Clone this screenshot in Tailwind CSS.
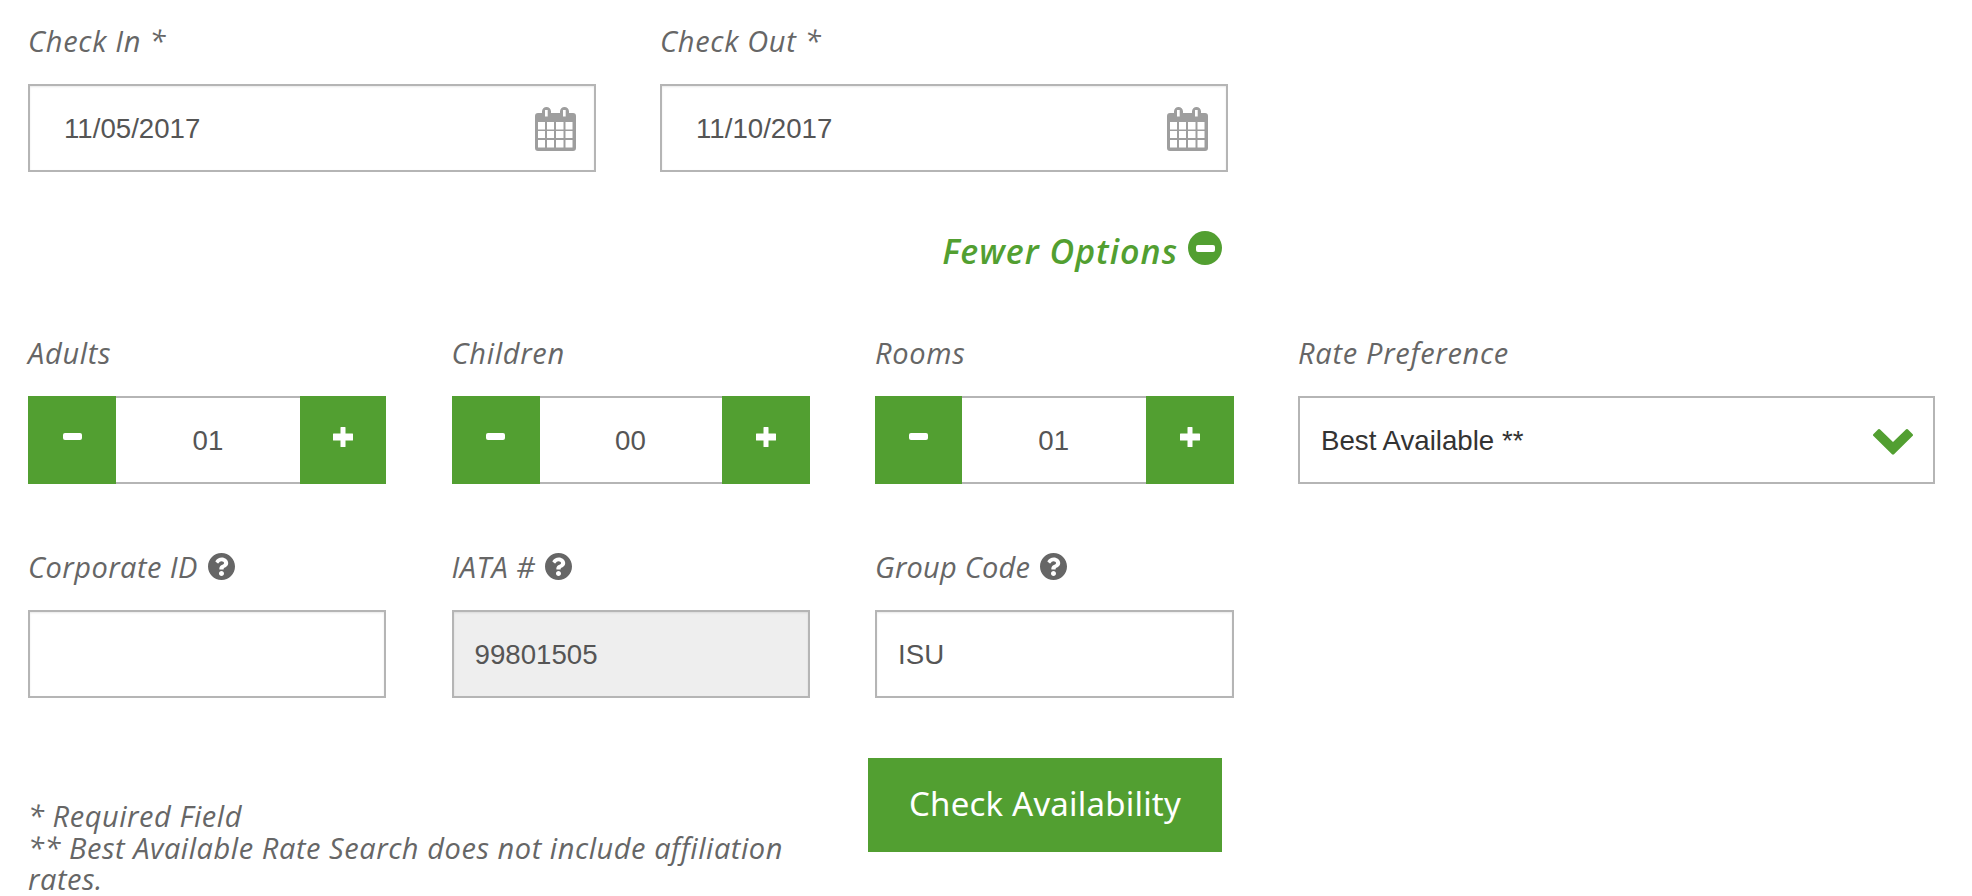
<!doctype html>
<html lang="en">
<head>
<meta charset="utf-8">
<title>Check Availability</title>
<script src="https://cdn.jsdelivr.net/npm/@tailwindcss/browser@4"></script>
</head>
<body class="bg-white font-['Liberation_Sans',Arial,sans-serif] text-[27.67px] text-[#555] overflow-hidden">
<main class="w-[1972px] h-[896px] pl-[28px] pt-[24px]">
  <section class="grid grid-cols-[568px_568px] gap-x-[64px]">
    <div>
      <label class="block h-[36px] mb-[24px] font-['Open_Sans',sans-serif] italic text-[29px] tracking-[0.7px] leading-[34px] text-[#666]">Check In *</label>
      <div class="relative h-[88px] border-2 border-[#b5b5b5] shadow-[inset_0_1px_2px_rgba(0,0,0,0.09)] pl-[34px] pt-[2px] flex items-center">
        <span>11/05/2017</span>
        <svg class="absolute left-[505px] top-[21px] w-[41px] h-[44px]" viewBox="0 0 41 44"><path fill="#9e9e9e" d="M3 6h4V4.500a4.500 4.500 0 0 1 9 0V6h9V4.500a4.500 4.500 0 0 1 9 0V6h4a3 3 0 0 1 3 3v32a3 3 0 0 1-3 3H3a3 3 0 0 1-3-3V9a3 3 0 0 1 3-3z"/><path fill="#fff" d="M10 3h2.700v6.500H10zM28 3h2.700v6.500H28zM3 15h7v7.500H3zM12 15h7v7.500h-7zM21 15h7.500v7.500H21zM30.500 15h7v7.500h-7zM3 24h7v7H3zM12 24h7v7h-7zM21 24h7.500v7H21zM30.500 24h7v7h-7zM3 33h7v7.500H3zM12 33h7v7.500h-7zM21 33h7.500v7.500H21zM30.500 33h7v7.500h-7z"/></svg>
      </div>
    </div>
    <div>
      <label class="block h-[36px] mb-[24px] font-['Open_Sans',sans-serif] italic text-[29px] tracking-[0.7px] leading-[34px] text-[#666]">Check Out *</label>
      <div class="relative h-[88px] border-2 border-[#b5b5b5] shadow-[inset_0_1px_2px_rgba(0,0,0,0.09)] pl-[34px] pt-[2px] flex items-center">
        <span>11/10/2017</span>
        <svg class="absolute left-[505px] top-[21px] w-[41px] h-[44px]" viewBox="0 0 41 44"><path fill="#9e9e9e" d="M3 6h4V4.500a4.500 4.500 0 0 1 9 0V6h9V4.500a4.500 4.500 0 0 1 9 0V6h4a3 3 0 0 1 3 3v32a3 3 0 0 1-3 3H3a3 3 0 0 1-3-3V9a3 3 0 0 1 3-3z"/><path fill="#fff" d="M10 3h2.700v6.500H10zM28 3h2.700v6.500H28zM3 15h7v7.500H3zM12 15h7v7.500h-7zM21 15h7.500v7.500H21zM30.500 15h7v7.500h-7zM3 24h7v7H3zM12 24h7v7h-7zM21 24h7.500v7H21zM30.500 24h7v7h-7zM3 33h7v7.500H3zM12 33h7v7.500h-7zM21 33h7.500v7.500H21zM30.500 33h7v7.500h-7z"/></svg>
      </div>
    </div>
  </section>

  <div class="w-[1194px] h-[164px] pt-[56px] flex justify-end items-start gap-[10px]">
    <a class="font-['Open_Sans',sans-serif] italic font-semibold text-[34px] tracking-[1px] leading-[46px] text-[#529f31]">Fewer Options</a>
    <span class="mt-[3px] w-[34px] h-[34px] rounded-full bg-[#529f31] flex items-center justify-center"><span class="block w-[19px] h-[7px] rounded-[2px] bg-white"></span></span>
  </div>

  <section class="grid grid-cols-[358px_358px_358.5px_636px] gap-x-[65.5px]">
    <div>
      <label class="block h-[36px] mb-[24px] font-['Open_Sans',sans-serif] italic text-[29px] tracking-[0.7px] leading-[34px] text-[#666]">Adults</label>
      <div class="flex h-[88px]">
        <button class="w-[88px] bg-[#529f31] flex justify-center pt-[37px]"><span class="block w-[19px] h-[7px] rounded-[2px] bg-white"></span></button>
        <div class="flex-1 border-y-2 border-[#b5b5b5] pt-[2px] flex items-center justify-center">01</div>
        <button class="w-[86px] bg-[#529f31] flex justify-center pt-[31px]"><svg class="w-[20px] h-[20px]" viewBox="0 0 20 20"><path fill="#fff" d="M8 0h4a.500.500 0 0 1 .500.500V6.500h7a.500.500 0 0 1 .500.500v6a.500.500 0 0 1-.500.500h-7v6a.500.500 0 0 1-.500.500H8a.500.500 0 0 1-.500-.500v-6h-7A.500.500 0 0 1 0 13V7a.500.500 0 0 1 .500-.500h7v-6A.500.500 0 0 1 8 0z"/></svg></button>
      </div>
    </div>
    <div>
      <label class="block h-[36px] mb-[24px] font-['Open_Sans',sans-serif] italic text-[29px] tracking-[0.7px] leading-[34px] text-[#666]">Children</label>
      <div class="flex h-[88px]">
        <button class="w-[88px] bg-[#529f31] flex justify-center pt-[37px]"><span class="block w-[19px] h-[7px] rounded-[2px] bg-white"></span></button>
        <div class="flex-1 border-y-2 border-[#b5b5b5] pt-[2px] flex items-center justify-center">00</div>
        <button class="w-[88px] bg-[#529f31] flex justify-center pt-[31px]"><svg class="w-[20px] h-[20px]" viewBox="0 0 20 20"><path fill="#fff" d="M8 0h4a.500.500 0 0 1 .500.500V6.500h7a.500.500 0 0 1 .500.500v6a.500.500 0 0 1-.500.500h-7v6a.500.500 0 0 1-.500.500H8a.500.500 0 0 1-.500-.500v-6h-7A.500.500 0 0 1 0 13V7a.500.500 0 0 1 .500-.500h7v-6A.500.500 0 0 1 8 0z"/></svg></button>
      </div>
    </div>
    <div>
      <label class="block h-[36px] mb-[24px] font-['Open_Sans',sans-serif] italic text-[29px] tracking-[0.7px] leading-[34px] text-[#666]">Rooms</label>
      <div class="flex h-[88px]">
        <button class="w-[87px] bg-[#529f31] flex justify-center pt-[37px]"><span class="block w-[19px] h-[7px] rounded-[2px] bg-white"></span></button>
        <div class="flex-1 border-y-2 border-[#b5b5b5] pt-[2px] flex items-center justify-center">01</div>
        <button class="w-[88px] bg-[#529f31] flex justify-center pt-[31px]"><svg class="w-[20px] h-[20px]" viewBox="0 0 20 20"><path fill="#fff" d="M8 0h4a.500.500 0 0 1 .500.500V6.500h7a.500.500 0 0 1 .500.500v6a.500.500 0 0 1-.500.500h-7v6a.500.500 0 0 1-.500.500H8a.500.500 0 0 1-.500-.500v-6h-7A.500.500 0 0 1 0 13V7a.500.500 0 0 1 .500-.500h7v-6A.500.500 0 0 1 8 0z"/></svg></button>
      </div>
    </div>
    <div class="-ml-[1px]">
      <label class="block h-[36px] mb-[24px] font-['Open_Sans',sans-serif] italic text-[29px] tracking-[0.7px] leading-[34px] text-[#666]">Rate Preference</label>
      <div class="h-[88px] border-2 border-[#b5b5b5] pl-[21px] pr-[20px] pt-[2px] flex items-center justify-between text-[#333]">
        <span>Best Available **</span>
        <svg class="w-[40px] h-[26px] mt-[1px]" viewBox="0 0 40 26"><path fill="#529f31" d="M5 .500a1.500 1.500 0 0 1 2.100 0L20 13 32.900.500a1.500 1.500 0 0 1 2.100 0l4.500 4.400a1.500 1.500 0 0 1 0 2.100L21 25.200a1.500 1.500 0 0 1-2 0L.500 7a1.500 1.500 0 0 1 0-2.100z"/></svg>
      </div>
    </div>
  </section>

  <section class="grid grid-cols-[358px_358px_358.5px] gap-x-[65.5px] mt-[65px]">
    <div>
      <label class="flex items-center gap-[10px] h-[36px] mb-[25px] font-['Open_Sans',sans-serif] italic text-[29px] tracking-[0.45px] leading-[34px] text-[#666]">Corporate ID
        <svg class="w-[27px] h-[27px] -mt-[1px]" viewBox="8 8 496 496"><path fill="#666" d="M504 256c0 136.997-111.043 248-248 248S8 392.997 8 256C8 119.083 119.043 8 256 8s248 111.083 248 248zM262.655 90c-54.497 0-89.255 22.957-116.549 63.758-3.536 5.286-2.353 12.415 2.715 16.258l34.699 26.310c5.205 3.947 12.621 3.008 16.665-2.122 17.864-22.658 30.113-35.797 57.303-35.797 20.429 0 45.698 13.148 45.698 32.958 0 14.976-12.363 22.667-32.534 33.976C247.128 238.528 216 254.941 216 296v4c0 6.627 5.373 12 12 12h56c6.627 0 12-5.373 12-12v-1.333c0-28.462 83.186-29.647 83.186-106.667 0-58.002-60.165-102-116.531-102zM256 338c-25.365 0-46 20.635-46 46 0 25.364 20.635 46 46 46s46-20.636 46-46c0-25.365-20.635-46-46-46z"/></svg>
      </label>
      <div class="h-[88px] border-2 border-[#b5b5b5] shadow-[inset_0_1px_2px_rgba(0,0,0,0.09)]"></div>
    </div>
    <div>
      <label class="flex items-center gap-[10px] h-[36px] mb-[25px] font-['Open_Sans',sans-serif] italic text-[29px] tracking-[0.45px] leading-[34px] text-[#666]">IATA #
        <svg class="w-[27px] h-[27px] -mt-[1px]" viewBox="8 8 496 496"><path fill="#666" d="M504 256c0 136.997-111.043 248-248 248S8 392.997 8 256C8 119.083 119.043 8 256 8s248 111.083 248 248zM262.655 90c-54.497 0-89.255 22.957-116.549 63.758-3.536 5.286-2.353 12.415 2.715 16.258l34.699 26.310c5.205 3.947 12.621 3.008 16.665-2.122 17.864-22.658 30.113-35.797 57.303-35.797 20.429 0 45.698 13.148 45.698 32.958 0 14.976-12.363 22.667-32.534 33.976C247.128 238.528 216 254.941 216 296v4c0 6.627 5.373 12 12 12h56c6.627 0 12-5.373 12-12v-1.333c0-28.462 83.186-29.647 83.186-106.667 0-58.002-60.165-102-116.531-102zM256 338c-25.365 0-46 20.635-46 46 0 25.364 20.635 46 46 46s46-20.636 46-46c0-25.365-20.635-46-46-46z"/></svg>
      </label>
      <div class="h-[88px] border-2 border-[#b5b5b5] bg-[#eeeeee] shadow-[inset_0_1px_2px_rgba(0,0,0,0.09)] pl-[21px] pt-[2px] flex items-center">99801505</div>
    </div>
    <div>
      <label class="flex items-center gap-[10px] h-[36px] mb-[25px] font-['Open_Sans',sans-serif] italic text-[29px] tracking-[0.2px] leading-[34px] text-[#666]">Group Code
        <svg class="w-[27px] h-[27px] -mt-[1px]" viewBox="8 8 496 496"><path fill="#666" d="M504 256c0 136.997-111.043 248-248 248S8 392.997 8 256C8 119.083 119.043 8 256 8s248 111.083 248 248zM262.655 90c-54.497 0-89.255 22.957-116.549 63.758-3.536 5.286-2.353 12.415 2.715 16.258l34.699 26.310c5.205 3.947 12.621 3.008 16.665-2.122 17.864-22.658 30.113-35.797 57.303-35.797 20.429 0 45.698 13.148 45.698 32.958 0 14.976-12.363 22.667-32.534 33.976C247.128 238.528 216 254.941 216 296v4c0 6.627 5.373 12 12 12h56c6.627 0 12-5.373 12-12v-1.333c0-28.462 83.186-29.647 83.186-106.667 0-58.002-60.165-102-116.531-102zM256 338c-25.365 0-46 20.635-46 46 0 25.364 20.635 46 46 46s46-20.636 46-46c0-25.365-20.635-46-46-46z"/></svg>
      </label>
      <div class="h-[88px] border-2 border-[#b5b5b5] shadow-[inset_0_1px_2px_rgba(0,0,0,0.09)] pl-[21px] pt-[2px] flex items-center">ISU</div>
    </div>
  </section>

  <section class="flex items-start mt-[60px]">
    <p class="w-[800px] pt-[42px] font-['Open_Sans',sans-serif] italic text-[29px] tracking-[0.55px] leading-[31.5px] text-[#666]">* Required Field<br>** Best Available Rate Search does not include affiliation rates.</p>
    <button class="ml-[40px] w-[354px] h-[94px] pb-[2px] bg-[#529f31] text-white font-['Noto_Sans',sans-serif] text-[33px] tracking-[0.2px]">Check Availability</button>
  </section>
</main>
</body>
</html>
